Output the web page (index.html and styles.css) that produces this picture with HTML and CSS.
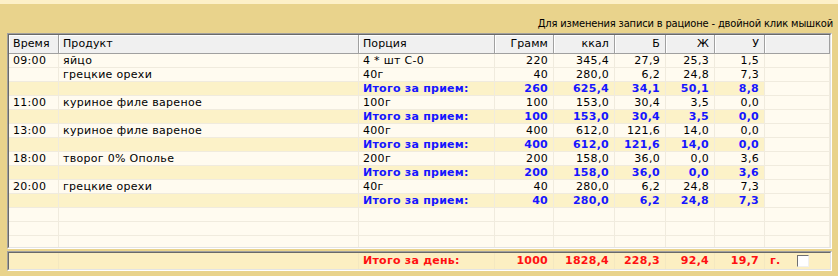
FILE: index.html
```html
<!DOCTYPE html>
<html lang="ru">
<head>
<meta charset="utf-8">
<link rel="stylesheet" href="styles.css">
</head>
<body>
<div class="topstrip"></div>
<div class="hint">Для изменения записи в рационе - двойной клик мышкой</div>
<div class="grid"><div class="grid-in">
  <div class="row head">
    <div class="c">Время</div><div class="c">Продукт</div><div class="c">Порция</div>
    <div class="c r">Грамм</div><div class="c r">ккал</div><div class="c r">Б</div>
    <div class="c r">Ж</div><div class="c r">У</div><div class="c"></div>
  </div>
  <div class="body">
    <div class="row"><div class="c">09:00</div><div class="c">яйцо</div><div class="c">4 * шт С-0</div><div class="c r">220</div><div class="c r">345,4</div><div class="c r">27,9</div><div class="c r">25,3</div><div class="c r">1,5</div><div class="c"></div></div>
    <div class="row"><div class="c"></div><div class="c">грецкие орехи</div><div class="c">40г</div><div class="c r">40</div><div class="c r">280,0</div><div class="c r">6,2</div><div class="c r">24,8</div><div class="c r">7,3</div><div class="c"></div></div>
    <div class="row sum"><div class="c"></div><div class="c"></div><div class="c">Итого за прием:</div><div class="c r">260</div><div class="c r">625,4</div><div class="c r">34,1</div><div class="c r">50,1</div><div class="c r">8,8</div><div class="c"></div></div>
    <div class="row"><div class="c">11:00</div><div class="c">куриное филе вареное</div><div class="c">100г</div><div class="c r">100</div><div class="c r">153,0</div><div class="c r">30,4</div><div class="c r">3,5</div><div class="c r">0,0</div><div class="c"></div></div>
    <div class="row sum"><div class="c"></div><div class="c"></div><div class="c">Итого за прием:</div><div class="c r">100</div><div class="c r">153,0</div><div class="c r">30,4</div><div class="c r">3,5</div><div class="c r">0,0</div><div class="c"></div></div>
    <div class="row"><div class="c">13:00</div><div class="c">куриное филе вареное</div><div class="c">400г</div><div class="c r">400</div><div class="c r">612,0</div><div class="c r">121,6</div><div class="c r">14,0</div><div class="c r">0,0</div><div class="c"></div></div>
    <div class="row sum"><div class="c"></div><div class="c"></div><div class="c">Итого за прием:</div><div class="c r">400</div><div class="c r">612,0</div><div class="c r">121,6</div><div class="c r">14,0</div><div class="c r">0,0</div><div class="c"></div></div>
    <div class="row"><div class="c">18:00</div><div class="c">творог 0% Ополье</div><div class="c">200г</div><div class="c r">200</div><div class="c r">158,0</div><div class="c r">36,0</div><div class="c r">0,0</div><div class="c r">3,6</div><div class="c"></div></div>
    <div class="row sum"><div class="c"></div><div class="c"></div><div class="c">Итого за прием:</div><div class="c r">200</div><div class="c r">158,0</div><div class="c r">36,0</div><div class="c r">0,0</div><div class="c r">3,6</div><div class="c"></div></div>
    <div class="row"><div class="c">20:00</div><div class="c">грецкие орехи</div><div class="c">40г</div><div class="c r">40</div><div class="c r">280,0</div><div class="c r">6,2</div><div class="c r">24,8</div><div class="c r">7,3</div><div class="c"></div></div>
    <div class="row sum"><div class="c"></div><div class="c"></div><div class="c">Итого за прием:</div><div class="c r">40</div><div class="c r">280,0</div><div class="c r">6,2</div><div class="c r">24,8</div><div class="c r">7,3</div><div class="c"></div></div>
    <div class="row"><div class="c"></div><div class="c"></div><div class="c"></div><div class="c"></div><div class="c"></div><div class="c"></div><div class="c"></div><div class="c"></div><div class="c"></div></div>
    <div class="row"><div class="c"></div><div class="c"></div><div class="c"></div><div class="c"></div><div class="c"></div><div class="c"></div><div class="c"></div><div class="c"></div><div class="c"></div></div>
    <div class="row"><div class="c"></div><div class="c"></div><div class="c"></div><div class="c"></div><div class="c"></div><div class="c"></div><div class="c"></div><div class="c"></div><div class="c"></div></div>
  </div>
</div></div>
<div class="footer"><div class="footer-in">
  <div class="row total"><div class="c"></div><div class="c"></div><div class="c">Итого за день:</div><div class="c r">1000</div><div class="c r">1828,4</div><div class="c r">228,3</div><div class="c r">92,4</div><div class="c r">19,7</div><div class="c unit"><span>г.</span><span class="check"></span></div></div>
</div></div>
</body>
</html>
```

FILE: styles.css
```css
html, body {
  margin: 0;
  padding: 0;
}
body {
  width: 838px;
  height: 276px;
  background: #e9d38c;
  overflow: hidden;
  font-family: "DejaVu Sans", Verdana, sans-serif;
  font-size: 11px;
  color: #000;
}
.topstrip {
  height: 4px;
  background: #fdf0c8;
}
.hint {
  height: 29px;
  box-sizing: border-box;
  display: flex;
  justify-content: flex-end;
  align-items: flex-end;
  padding: 0 5px 3px 0;
  font-family: "DejaVu Sans Condensed", "DejaVu Sans", sans-serif;
  font-stretch: condensed;
  font-size: 11px;
  line-height: 13px;
  letter-spacing: -0.15px;
}
.grid {
  margin-left: 7px;
  width: 825px;
  box-sizing: border-box;
  border: 1px solid;
  border-color: #a0a0a0 #ffffff #ffffff #a0a0a0;
}
.grid-in {
  border: 1px solid;
  border-color: #696969 #e3e3e3 #e3e3e3 #696969;
  background: #fffbf0;
}
.row {
  display: grid;
  grid-template-columns: 50px 300px 136px 59px 61px 51px 49px 50px 65px;
  height: 14px;
  line-height: 13px;
}
.c {
  box-sizing: border-box;
  border-right: 1px solid #f0ebde;
  border-bottom: 1px solid #f0ebde;
  padding: 0 5px 0 4px;
  white-space: nowrap;
  overflow: hidden;
  letter-spacing: 0.3px;
}
.r {
  text-align: right;
}
.head {
  height: 19px;
  line-height: 17px;
}
.head .c {
  background: #f0f0f0;
  border-right: 1px solid #a0a0a0;
  border-bottom: 1px solid #a0a0a0;
  box-shadow: inset 1px 1px #ffffff;
  color: #000;
  letter-spacing: 0.1px;
}
.body {
  height: 193px;
  overflow: hidden;
}
.sum .c {
  background: #fcf2c8;
  color: #1616ff;
  font-weight: bold;
  letter-spacing: 0.25px;
}
.sum .c:last-child {
  background: #fffbf0;
}
.footer {
  margin: 2px 0 0 7px;
  width: 825px;
  box-sizing: border-box;
  border: 1px solid;
  border-color: #a0a0a0 #ffffff #ffffff #a0a0a0;
}
.footer-in {
  border: 1px solid;
  border-color: #696969 #e3e3e3 #e3e3e3 #696969;
  background: #fcefc2;
}
.total {
  height: 16px;
  line-height: 16px;
}
.total .c {
  border-bottom: none;
  border-right-color: #f4e8c0;
  color: #ff1010;
  font-weight: bold;
  letter-spacing: 0.25px;
}
.total .unit {
  display: flex;
  align-items: center;
  gap: 17px;
  padding-left: 5px;
  border-right: none;
}
.check {
  width: 10px;
  height: 10px;
  background: #ffffff;
  border: 1px solid;
  border-color: #707070 #f0f0f0 #f0f0f0 #707070;
}
```
